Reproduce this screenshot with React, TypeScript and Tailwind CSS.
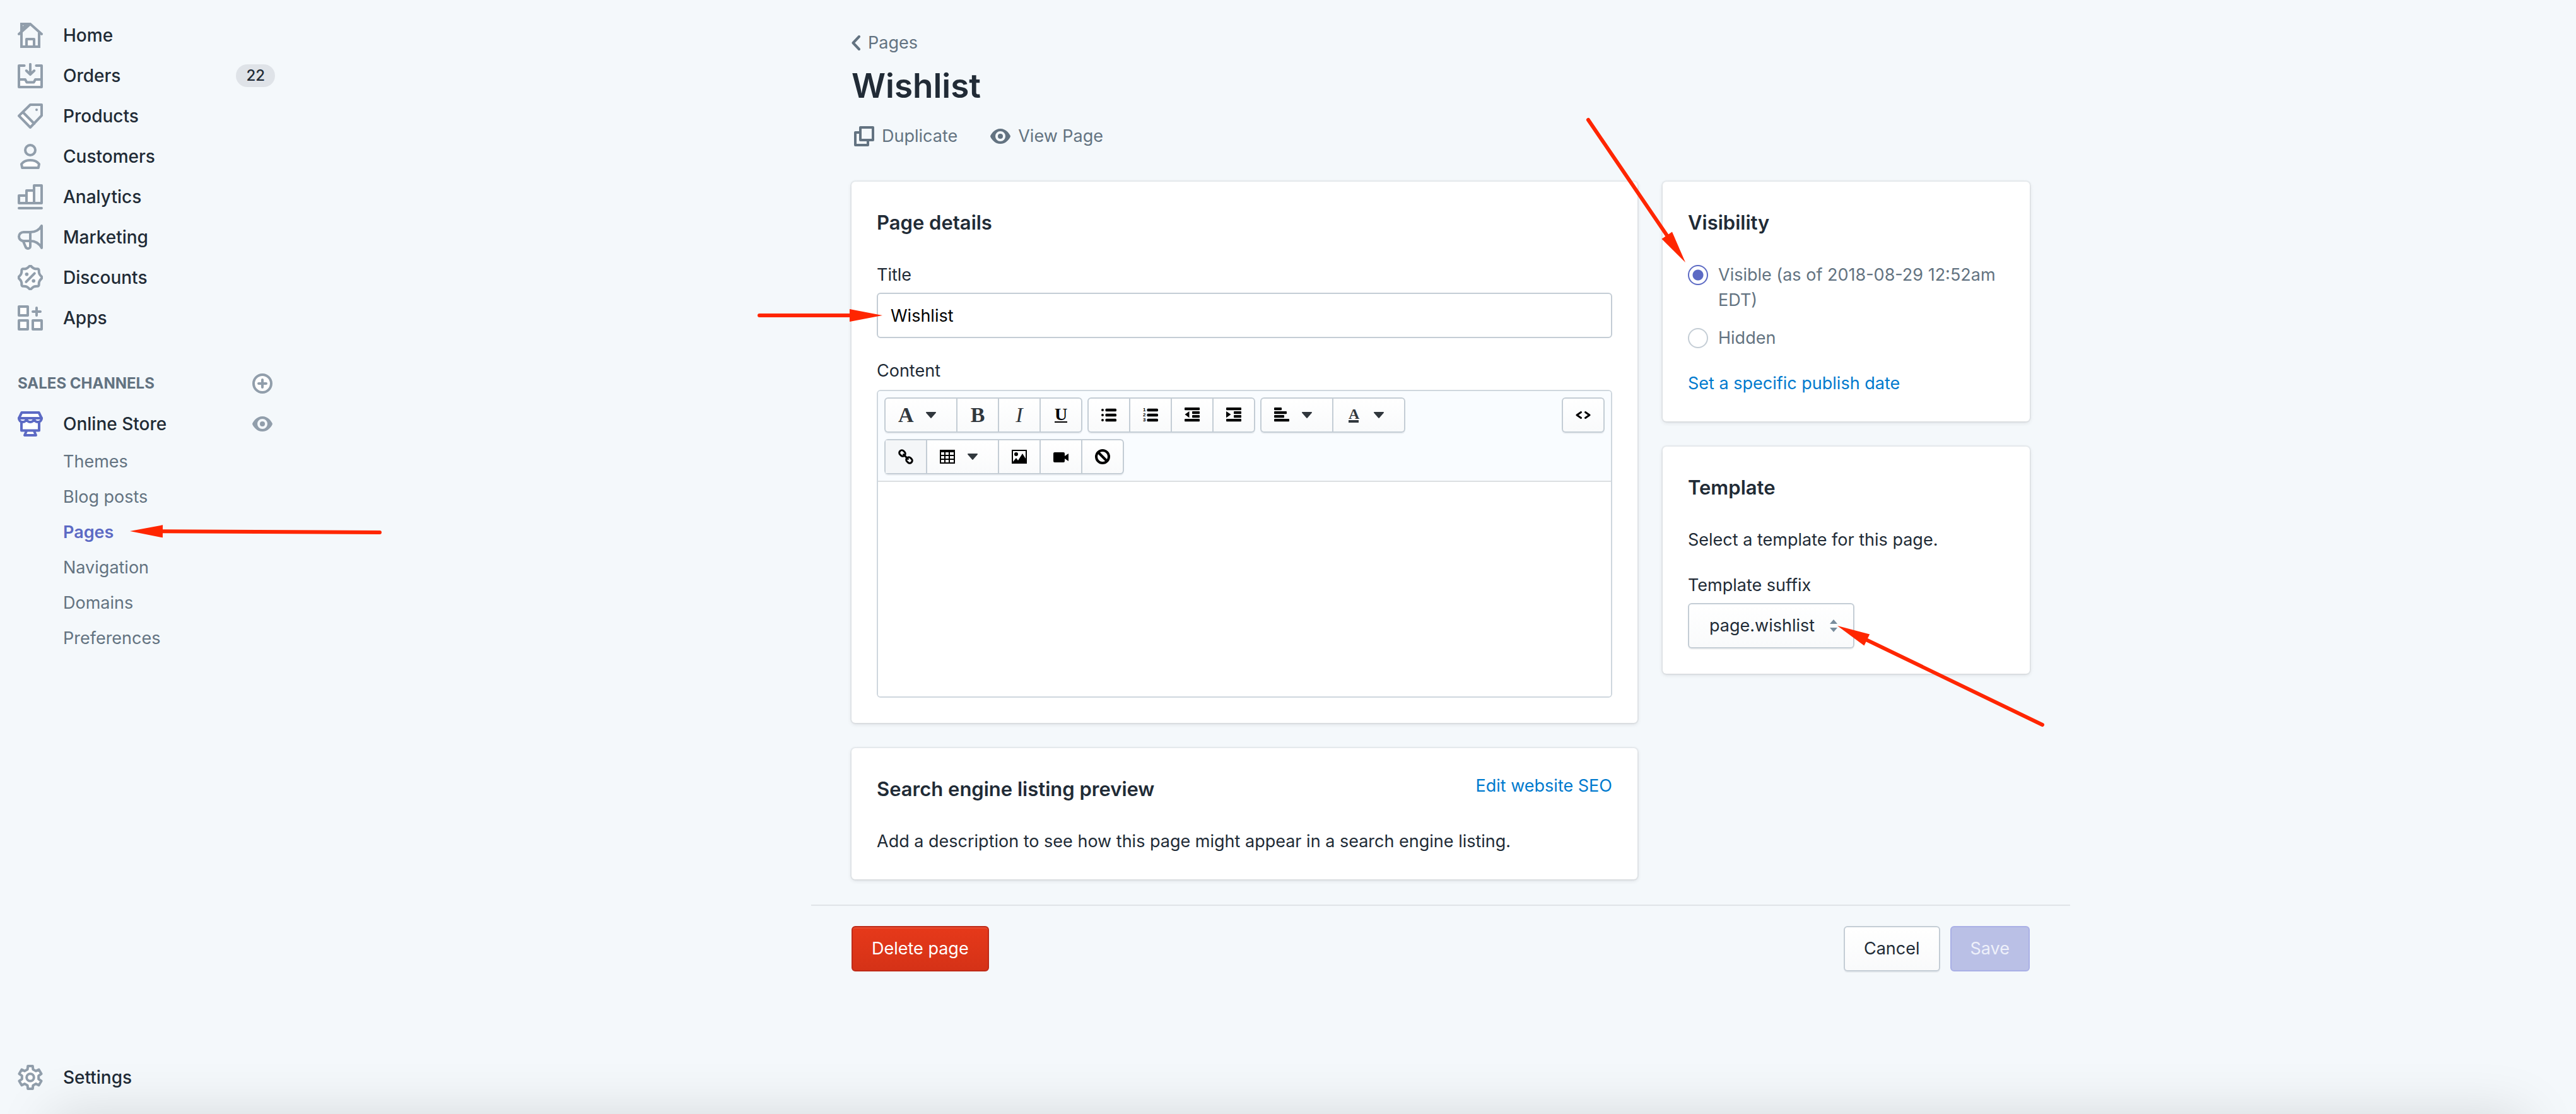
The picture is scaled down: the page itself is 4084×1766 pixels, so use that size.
import React from "react";

type IconProps = { className?: string };

/* ---------- navigation icons, drawn on a 20-unit grid ---------- */

function Duotone({ children, className = "text-[#919eab]" }: { children: React.ReactNode; className?: string }) {
  return (
    <svg
      viewBox="0 0 20 20"
      className={`h-10 w-10 shrink-0 ${className}`}
      fill="none"
      stroke="currentColor"
      strokeWidth="2"
      strokeLinejoin="round"
      strokeLinecap="round"
      aria-hidden="true"
    >
      {children}
    </svg>
  );
}

const polar = (r: number, deg: number): [number, number] => {
  const a = ((deg - 90) * Math.PI) / 180;
  return [10 + r * Math.cos(a), 10 + r * Math.sin(a)];
};
const pt = ([x, y]: [number, number]) => `${x.toFixed(2)} ${y.toFixed(2)}`;

const scallops = (() => {
  const pts: [number, number][] = [];
  for (let i = 0; i < 8; i++) {
    pts.push(polar(9.8, i * 45), polar(7.9, i * 45 + 14), polar(7.9, i * 45 + 31));
  }
  const mid = (a: [number, number], b: [number, number]): [number, number] => [(a[0] + b[0]) / 2, (a[1] + b[1]) / 2];
  let d = `M${pt(mid(pts[pts.length - 1], pts[0]))}`;
  pts.forEach((p, i) => {
    d += `Q${pt(p)} ${pt(mid(p, pts[(i + 1) % pts.length]))}`;
  });
  return d + "Z";
})();

const cog = (() => {
  const pts: [number, number][] = [];
  for (let i = 0; i < 6; i++) {
    const a = i * 60;
    pts.push(polar(6.7, a - 19), polar(9.2, a - 12), polar(9.2, a + 12), polar(6.7, a + 19));
  }
  return "M" + pts.map(pt).join("L") + "Z";
})();

const HomeIcon = () => (
  <Duotone>
    <path d="M7 19v-6h6v6z" fill="#fff" />
    <path d="M3 8.2V19h14V8.2M3 8V1h4.2L3 5.4M1 9l9-8 9 8" strokeLinejoin="miter" />
  </Duotone>
);
const OrdersIcon = () => (
  <Duotone>
    <path d="M1 13.2h5l1.2 2.3h5.6l1.2-2.3h5V19H1z" fill="#fff" stroke="none" />
    <path d="M5.3 2H1v17h18V2h-4.3M1 13h5l1.2 2.3h5.6L14 13h5M10 .9V9M6.9 6L10 9.1 13.1 6" />
  </Duotone>
);
const ProductsIcon = () => (
  <Duotone>
    <path d="M4 7l9 9-3 3-9-9.3z" fill="#fff" stroke="none" />
    <path d="M10 1h9v8.6L10 19 1 9.8zM4.2 7l8.9 9" />
    <circle cx="15" cy="5" r="1" fill="currentColor" stroke="none" />
  </Duotone>
);
const CustomersIcon = () => (
  <Duotone>
    <circle cx="10" cy="5" r="4" />
    <path d="M3 16.1c1.4-2 4-3.1 7-3.1s5.6 1.1 7 3.1L16.4 19H3.6z" fill="#fff" />
  </Duotone>
);
const AnalyticsIcon = () => (
  <Duotone>
    <path d="M7 5h6v10H7z" fill="#fff" />
    <path d="M1 9h6v6H1zM13 1h6v14h-6zM1 19h18" />
  </Duotone>
);
const MarketingIcon = () => (
  <Duotone>
    <path d="M4.3 13l2 4.7C6.7 18.6 7.3 19 8.2 19c1.1 0 1.8-.8 1.8-1.8V13z" fill="#fff" />
    <path d="M10 6H4.7C2.6 6 1 7.5 1 9.5S2.6 13 4.7 13H10zM10 6c3.6 0 7-1.6 9-5v17.4C17 14.9 13.6 13 10 13M19 1v17.5" />
  </Duotone>
);
const DiscountsIcon = () => (
  <Duotone>
    <path d={scallops} fill="#fff" fillOpacity="0.6" />
    <path d="M6.7 13.4l6.700-6.700" />
    <circle cx="7.2" cy="7.4" r="1.4" fill="currentColor" stroke="none" />
    <circle cx="12.6" cy="12.6" r="1.4" fill="currentColor" stroke="none" />
  </Duotone>
);
const AppsIcon = () => (
  <Duotone>
    <path d="M1 1h7v7H1zM1 12h7v7H1zM12 12h7v7h-7z" fill="#fff" />
    <path d="M15 2v6M12 5h6" />
  </Duotone>
);
const StoreIcon = () => (
  <Duotone className="text-[#5c6ac4]">
    <path d="M3 8h14v7.2H3z" fill="#fff" stroke="none" />
    <path d="M3.2 1h13.6L19 5.5H1z" fill="#fff" />
    <path d="M1 5.500c0 4 6 4 6 0 0 4 6 4 6 0 0 4 6 4 6 0zM3 8.500v6.700h14V8.500M7 15.600L5.500 19h9L13 15.600" fill="#fff" />
  </Duotone>
);
const SettingsIcon = () => (
  <Duotone>
    <path d={cog} fill="#fff" />
    <circle cx="10" cy="10" r="2.9" />
  </Duotone>
);

const EyeIcon = ({ className }: IconProps) => (
  <svg viewBox="0 0 32 26" className={className} fill="currentColor" aria-hidden="true">
    <path
      fillRule="evenodd"
      d="M16 1C7.500 1 2.200 8 .3 12.100a2.200 2.200 0 0 0 0 1.800C2.200 18 7.500 25 16 25s13.800-7 15.700-11.100a2.200 2.200 0 0 0 0-1.800C29.800 8 24.500 1 16 1zm0 20a8 8 0 1 1 0-16 8 8 0 0 1 0 16z"
    />
    <circle cx="16" cy="13" r="4" />
  </svg>
);
const CirclePlusIcon = () => (
  <svg viewBox="0 0 32 32" className="h-8 w-8 text-[#919eab]" fill="#fff" stroke="currentColor" strokeWidth="4" aria-hidden="true">
    <circle cx="16" cy="16" r="14" />
    <path d="M16 10v12M10 16h12" strokeLinecap="round" />
  </svg>
);
const DuplicateIcon = () => (
  <svg viewBox="0 0 32 32" className="h-8 w-8" fill="none" stroke="currentColor" strokeWidth="4" strokeLinejoin="round" aria-hidden="true">
    <path d="M10 2h20v20H10zM10 10H2v20h20v-8" />
  </svg>
);

/* ---------- editor icons ---------- */

const Glyph = ({ children }: { children: React.ReactNode }) => (
  <svg viewBox="0 0 24 24" className="h-6 w-6" fill="#000" aria-hidden="true">
    {children}
  </svg>
);
const BulletIcon = () => (
  <Glyph>
    {[4, 12, 20].map((y) => (
      <g key={y}>
        <circle cx="2" cy={y} r="2" />
        <rect x="6.500" y={y - 2.2} width="17.500" height="4.400" rx="1.500" />
      </g>
    ))}
  </Glyph>
);
const NumberIcon = () => (
  <Glyph>
    {[4, 12, 20].map((y, i) => (
      <g key={y}>
        <text x="0" y={y + 2} fontSize="8" fontWeight="700" fontFamily="Liberation Sans, sans-serif">
          {i + 1}
        </text>
        <rect x="6.500" y={y - 2.2} width="17.500" height="4.400" rx="1.500" />
      </g>
    ))}
  </Glyph>
);
const OutdentIcon = () => (
  <Glyph>
    <rect y="0" width="24" height="4.200" rx="1" />
    <rect x="12" y="6" width="12" height="4.200" rx="1" />
    <rect x="12" y="12" width="12" height="4.200" rx="1" />
    <rect y="18" width="24" height="4.200" rx="1" />
    <path d="M.5 11.100L7.500 6v10.200z" />
  </Glyph>
);
const IndentIcon = () => (
  <Glyph>
    <rect y="0" width="24" height="4.200" rx="1" />
    <rect x="12" y="6" width="12" height="4.200" rx="1" />
    <rect x="12" y="12" width="12" height="4.200" rx="1" />
    <rect y="18" width="24" height="4.200" rx="1" />
    <path d="M7.500 11.100L0 6v10.200z" />
  </Glyph>
);
const AlignIcon = () => (
  <Glyph>
    <rect y="0" width="12" height="4.200" rx="1" />
    <rect y="6" width="20" height="4.200" rx="1" />
    <rect y="12" width="16" height="4.200" rx="1" />
    <rect y="18" width="24" height="4.200" rx="1" />
  </Glyph>
);
const LinkIcon = () => (
  <Glyph>
    <g fill="none" stroke="#000" strokeWidth="3">
      <rect x="-5" y="-4" width="10" height="8" rx="3.800" transform="translate(6.500 6.500) rotate(45)" />
      <rect x="-5" y="-4" width="10" height="8" rx="3.800" transform="translate(17.500 17.500) rotate(45)" />
      <path d="M8.500 8.500l7 7" strokeLinecap="round" />
    </g>
  </Glyph>
);
const TableIcon = () => (
  <Glyph>
    <path fillRule="evenodd" d="M0 1h24v22H0zM2 5v4h5V5zm7 0v4h5V5zm7 0v4h6V5zM2 11v4h5v-4zm7 0v4h5v-4zm7 0v4h6v-4zM2 17v4h5v-4zm7 0v4h5v-4zm7 0v4h6v-4z" />
  </Glyph>
);
const PictureIcon = () => (
  <Glyph>
    <path fillRule="evenodd" d="M0 1h24v22H0zM2 3v17l5-6 3 4 7-11 5 8V3z" />
    <circle cx="7" cy="8" r="3" />
  </Glyph>
);
const VideoIcon = () => (
  <Glyph>
    <rect x="0" y="5" width="18" height="16" rx="2" />
    <path d="M24 7v12l-6-4v-4z" />
  </Glyph>
);
const BanIcon = () => (
  <Glyph>
    <g fill="none" stroke="#000" strokeWidth="4">
      <circle cx="12" cy="12" r="10" />
      <path d="M5.500 5.500l13 13" />
    </g>
  </Glyph>
);
const CodeIcon = () => (
  <svg viewBox="0 0 24 12" className="h-3 w-6" fill="none" stroke="#000" strokeWidth="3" strokeLinejoin="round" strokeLinecap="round" aria-hidden="true">
    <path d="M8.500 1.500L2 6l6.500 4.500M15.500 1.500L22 6l-6.500 4.500" />
  </svg>
);
const Caret = () => (
  <svg viewBox="0 0 16 10" className="h-[10px] w-4 shrink-0" fill="#31373d" aria-hidden="true">
    <path d="M1 0h14a1 1 0 0 1 .8 1.500L9 9.300a1.300 1.300 0 0 1-2 0L.2 1.500A1 1 0 0 1 1 0z" />
  </svg>
);

/* ---------- annotation arrow: tip at its own origin, tail at (dx, dy) ---------- */

function Arrow({ dx, dy, className }: { dx: number; dy: number; className: string }) {
  const len = Math.hypot(dx, dy);
  const ux = dx / len;
  const uy = dy / len;
  const bx = ux * 52;
  const by = uy * 52;
  return (
    <svg className={`pointer-events-none absolute z-10 h-px w-px overflow-visible ${className}`} aria-hidden="true">
      <path d={`M${bx * 0.9} ${by * 0.9}L${dx} ${dy}`} stroke="#ff2600" strokeWidth="6" strokeLinecap="round" />
      <path d={`M0 0L${bx - uy * 10} ${by + ux * 10}L${bx + uy * 10} ${by - ux * 10}Z`} fill="#ff2600" />
    </svg>
  );
}

/* ---------- page parts ---------- */

const NAV = [
  { label: "Home", Icon: HomeIcon },
  { label: "Orders", Icon: OrdersIcon, badge: "22" },
  { label: "Products", Icon: ProductsIcon },
  { label: "Customers", Icon: CustomersIcon },
  { label: "Analytics", Icon: AnalyticsIcon },
  { label: "Marketing", Icon: MarketingIcon },
  { label: "Discounts", Icon: DiscountsIcon },
  { label: "Apps", Icon: AppsIcon },
];
const SUB = ["Themes", "Blog posts", "Pages", "Navigation", "Domains", "Preferences"];

function Sidebar() {
  return (
    <nav className="flex min-h-screen w-[484px] shrink-0 flex-col pt-6 pb-[26px] pl-7">
      <ul>
        {NAV.map(({ label, Icon, badge }) => (
          <li key={label}>
            <a href="#" className="flex h-16 w-[408px] items-center gap-8 text-[28px] font-medium">
              <Icon />
              {label}
              {badge && (
                <span className="ml-auto flex h-9 items-center rounded-full bg-[#dfe3e8] px-4 text-[24px]">{badge}</span>
              )}
            </a>
          </li>
        ))}
      </ul>
      <div className="mt-10 flex h-16 w-[404px] items-center justify-between">
        <h2 className="text-[24px] font-bold text-[#637381]">SALES CHANNELS</h2>
        <button type="button" aria-label="Add sales channel">
          <CirclePlusIcon />
        </button>
      </div>
      <div className="flex h-16 w-[404px] items-center justify-between">
        <a href="#" className="flex items-center gap-8 text-[28px] font-medium">
          <StoreIcon />
          Online Store
        </a>
        <a href="#" aria-label="View online store" className="text-[#919eab]">
          <EyeIcon className="h-[26px] w-8" />
        </a>
      </div>
      <ul>
        {SUB.map((label) => (
          <li key={label} className="relative flex h-14 items-center pl-[72px]">
            {label === "Pages" ? (
              <>
                <a href="#" aria-current="page" className="font-semibold text-[#5c6ac4]">
                  {label}
                </a>
                <Arrow dx={396} dy={2} className="top-[26px] left-[178px]" />
              </>
            ) : (
              <a href="#" className="text-[#637381]">
                {label}
              </a>
            )}
          </li>
        ))}
      </ul>
      <a href="#" className="mt-auto flex h-16 items-center gap-8 text-[28px] font-medium">
        <SettingsIcon />
        Settings
      </a>
    </nav>
  );
}

function Card({ children }: { children: React.ReactNode }) {
  return (
    <section className="rounded-md bg-white p-10 shadow-[0_0_0_2px_rgba(63,63,68,0.05),0_2px_6px_rgba(63,63,68,0.15)]">{children}</section>
  );
}
const CardTitle = ({ children }: { children: React.ReactNode }) => (
  <h2 className="text-[31px] leading-[50px] font-semibold">{children}</h2>
);

function ToolGroup({ children }: { children: React.ReactNode }) {
  return (
    <div className="flex divide-x-2 divide-[#c4cdd5] rounded-md border-2 border-[#c4cdd5] bg-linear-to-b from-white to-[#f9fafb] shadow-[0_2px_0_rgba(22,29,37,0.05)]">
      {children}
    </div>
  );
}
function Tool({ label, menu, active, children }: { label: string; menu?: boolean; active?: boolean; children: React.ReactNode }) {
  return (
    <button
      type="button"
      aria-label={label}
      className={`box-content flex h-[52px] items-center ${menu ? "w-[92px] gap-5 pl-5" : "w-16 justify-center"} ${active ? "bg-[#f4f6f8]" : ""}`}
    >
      {children}
      {menu && <Caret />}
    </button>
  );
}
const serif = "font-['Liberation_Serif',serif] text-[34px] leading-none text-[#31373d]";

function Toolbar() {
  return (
    <div className="flex items-start justify-between border-b-2 border-[#dcdfe1] bg-[#f9fcff] p-[10px]">
      <div className="flex flex-col gap-[10px]">
        <div className="flex gap-2">
          <ToolGroup>
            <Tool label="Formatting" menu>
              <span className={`${serif} w-6 text-center font-bold`}>A</span>
            </Tool>
            <Tool label="Bold">
              <span className={`${serif} font-bold`}>B</span>
            </Tool>
            <Tool label="Italic">
              <span className={`${serif} italic`}>I</span>
            </Tool>
            <Tool label="Underline">
              <span className="flex flex-col items-center border-b-2 border-black font-['Liberation_Serif',serif] text-[28px] leading-[22px] font-bold text-black">U</span>
            </Tool>
          </ToolGroup>
          <ToolGroup>
            <Tool label="Bulleted list"><BulletIcon /></Tool>
            <Tool label="Numbered list"><NumberIcon /></Tool>
            <Tool label="Outdent"><OutdentIcon /></Tool>
            <Tool label="Indent"><IndentIcon /></Tool>
          </ToolGroup>
          <ToolGroup>
            <Tool label="Alignment" menu><AlignIcon /></Tool>
            <Tool label="Color" menu>
              <span className="flex w-6 justify-center">
                <span className="w-4 border-b-4 border-[#31373d] text-center font-['Liberation_Serif',serif] text-[24px] leading-[20px] font-bold text-[#31373d]">A</span>
              </span>
            </Tool>
          </ToolGroup>
        </div>
        <div className="flex">
          <ToolGroup>
            <Tool label="Insert link" active><LinkIcon /></Tool>
            <Tool label="Insert table" menu><TableIcon /></Tool>
            <Tool label="Insert image"><PictureIcon /></Tool>
            <Tool label="Insert video"><VideoIcon /></Tool>
            <Tool label="Clear formatting"><BanIcon /></Tool>
          </ToolGroup>
        </div>
      </div>
      <ToolGroup>
        <Tool label="Show HTML"><CodeIcon /></Tool>
      </ToolGroup>
    </div>
  );
}

const radio =
  "h-8 w-8 shrink-0 appearance-none rounded-full border-2 border-[#c4cdd5] bg-white mt-1 checked:border-[#5c6ac4] checked:bg-radial checked:from-[#5c6ac4] checked:from-[8px] checked:to-white checked:to-[9px]";

export default function App() {
  return (
    <div className="relative flex min-h-screen overflow-hidden bg-[#f4f8fb] font-['Inter',sans-serif] text-[27px] leading-10 text-[#212b36]">
      <div className="pointer-events-none absolute inset-x-20 top-full h-64 shadow-[0_0_88px_rgba(0,0,0,0.13)]" />
      <Sidebar />
      <main className="min-w-0 flex-1 pt-12">
        <div className="mx-auto max-w-[1996px]">
          <div className="px-16">
            <header>
              <a href="#" className="flex w-fit items-center gap-3 text-[#637381]">
                <svg viewBox="0 0 14 24" className="h-6 w-[14px]" fill="none" stroke="currentColor" strokeWidth="4" strokeLinecap="round" strokeLinejoin="round" aria-hidden="true">
                  <path d="M12 2L2.500 12 12 22" />
                </svg>
                Pages
              </a>
              <h1 className="mt-4 text-[53px] leading-[64px] font-semibold">Wishlist</h1>
              <div className="mt-7 flex gap-[52px] pl-1 text-[#637381]">
                <button type="button" className="flex items-center gap-3">
                  <DuplicateIcon />
                  Duplicate
                </button>
                <button type="button" className="flex items-center gap-3">
                  <EyeIcon className="h-[26px] w-8" />
                  View Page
                </button>
              </div>
            </header>

            <div className="mt-[52px] flex items-start gap-10">
              <div className="flex min-w-0 flex-1 flex-col gap-10">
                <Card>
                  <CardTitle>Page details</CardTitle>
                  <label htmlFor="title" className="mt-[38px] block">
                    Title
                  </label>
                  <div className="relative mt-2">
                    <input
                      id="title"
                      defaultValue="Wishlist"
                      className="block h-[72px] w-full rounded-md border-2 border-[#c4cdd5] bg-white px-5 text-black"
                    />
                    <Arrow dx={-195} dy={0} className="top-9 left-[9px]" />
                  </div>
                  <label htmlFor="content" className="mt-8 block">
                    Content
                  </label>
                  <div className="mt-[10px] overflow-hidden rounded-md border-2 border-[#cfd7de]">
                    <Toolbar />
                    <textarea id="content" className="block h-[340px] w-full resize-none bg-white p-5" />
                  </div>
                </Card>
                <Card>
                  <div className="flex items-start justify-between">
                    <CardTitle>Search engine listing preview</CardTitle>
                    <a href="#" className="text-[#007ace]">
                      Edit website SEO
                    </a>
                  </div>
                  <p className="mt-[38px]">Add a description to see how this page might appear in a search engine listing.</p>
                </Card>
              </div>

              <aside className="flex w-[582px] shrink-0 flex-col gap-10">
                <Card>
                  <CardTitle>Visibility</CardTitle>
                  <div className="relative mt-[38px] flex flex-col gap-5 text-[#637381]">
                    <label className="flex items-start gap-4">
                      <input type="radio" name="visibility" defaultChecked className={radio} />
                      <span>Visible (as of 2018-08-29 12:52am EDT)</span>
                    </label>
                    <label className="flex items-start gap-4">
                      <input type="radio" name="visibility" className={radio} />
                      <span>Hidden</span>
                    </label>
                    <Arrow dx={-154} dy={-226} className="top-0 -left-1" />
                  </div>
                  <a href="#" className="mt-8 block text-[#007ace]">
                    Set a specific publish date
                  </a>
                </Card>
                <Card>
                  <CardTitle>Template</CardTitle>
                  <p className="mt-[38px]">Select a template for this page.</p>
                  <label htmlFor="suffix" className="mt-8 block">
                    Template suffix
                  </label>
                  <div className="relative mt-2 w-fit">
                    <select
                      id="suffix"
                      className="block h-[72px] w-[264px] appearance-none rounded-md border-2 border-[#c4cdd5] bg-linear-to-b from-white to-[#f9fafb] pl-8 shadow-[0_2px_0_rgba(22,29,37,0.05)]"
                    >
                      <option>page.wishlist</option>
                    </select>
                    <svg viewBox="0 0 12 20" className="pointer-events-none absolute top-[26px] right-[27px] h-5 w-3" fill="#798c9c" aria-hidden="true">
                      <path d="M6 0l6 7H0zM6 20l6-7H0z" />
                    </svg>
                    <Arrow dx={325} dy={157} className="top-9 left-[237px]" />
                  </div>
                </Card>
              </aside>
            </div>
          </div>

          <footer className="mt-10 flex items-center gap-4 border-t-2 border-[#dfe3e8] px-16 pt-8">
            <button
              type="button"
              className="mr-auto h-[72px] rounded-md border-2 border-[#bf2a17] bg-linear-to-b from-[#e6391a] to-[#d53217] px-[30px] text-white shadow-[inset_0_2px_0_rgba(255,255,255,0.1)]"
            >
              Delete page
            </button>
            <button
              type="button"
              className="h-[72px] rounded-md border-2 border-[#c4cdd5] bg-linear-to-b from-white to-[#f9fafb] px-[30px] shadow-[0_2px_0_rgba(22,29,37,0.05)]"
            >
              Cancel
            </button>
            <button type="button" disabled className="h-[72px] rounded-md border-2 border-[#aab0e6] bg-[#bac0e6] px-[30px] text-[#eef0fa]">
              Save
            </button>
          </footer>
        </div>
      </main>
    </div>
  );
}
